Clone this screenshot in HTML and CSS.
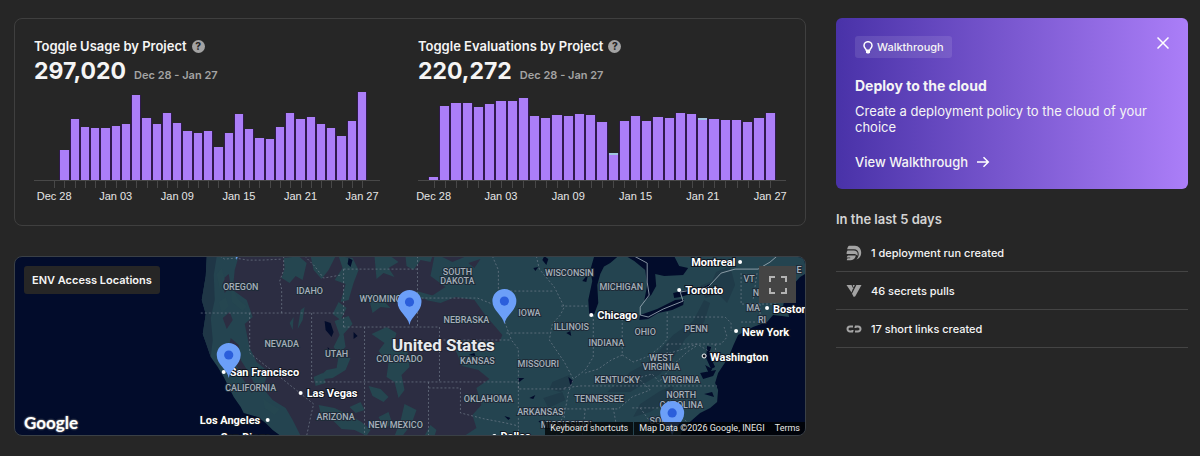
FILE: index.html
```html
<!DOCTYPE html>
<html lang="en">
<head>
<meta charset="UTF-8">
<meta name="viewport" content="width=device-width, initial-scale=1">
<title>Dashboard</title>
<link rel="stylesheet" href="styles.css">
</head>

<body>
<div class="dashboard">

	<main class="main">
		<section class="stats">
			<div class="stat">
				<h2>Toggle Usage by Project <button class="help" type="button" aria-label="About toggle usage">?</button></h2>
				<p class="total"><strong>297,020</strong> <span>Dec 28 - Jan 27</span></p>
				<div class="chart usage" id="usage"></div>
			</div>
			<div class="stat">
				<h2>Toggle Evaluations by Project <button class="help" type="button" aria-label="About toggle evaluations">?</button></h2>
				<p class="total"><strong>220,272</strong> <span>Dec 28 - Jan 27</span></p>
				<div class="chart evaluations" id="evaluations"></div>
			</div>
		</section>

		<section class="map">
			<svg class="canvas" viewBox="14 256 791 180" preserveAspectRatio="xMidYMid slice">
				<!-- land -->
				<path class="land" d="M206 256L205 276L201 300L205 314L202 334L206 345L210 357L217 367L223 377L228 387L233 397L240 407L243 413L257 417L265 423L272 430L280 436H680L684 427L692 420L700 413L710 408L717 402L718 390L715 383L718 373L724 364L729 356L733 346L738 335L753 327L767 322L773 315L782 316L789 317L788 311L783 307L785 295L793 285L800 277L805 274V256Z"/>
				<path class="coast" d="M206 256L205 276L201 300L205 314L202 334L210 357L212 340L210 318L214 300L213 275L216 256Z"/>
				<!-- dry plateau -->
				<path class="dry" d="M238 256L234 270L232 290L246 300L252 317L244 324L249 348L256 362L268 372L262 388L272 400L285 408L292 420L300 436H464L476 428L472 415L481 405L476 388L489 379L478 370L462 366L455 350L458 340L499 342L502 335L484 314L474 300L455 297L440 303L425 300L445 287L430 276L434 256Z"/>
				<path class="dry" d="M221 280L228 274L230 286L224 293ZM222 318L229 312L232 320L226 329ZM230 338L238 345L240 360L247 371L256 388L251 393L241 377L234 362L228 349ZM440 256L466 256L452 262ZM468 263L480 259L474 268Z"/>
				<!-- forests and mountains -->
				<path class="hill" d="M216 274L221 268L224 279L219 290ZM218 302L225 297L228 306L221 313ZM230 285L238 300L246 306L242 311L231 302ZM283 258L298 256L306 263L302 280L295 276L289 283L281 278L284 268ZM310 256L335 256L328 270L321 279L313 270ZM338 256L352 258L358 270L353 283L348 300L340 302L345 284L334 280L342 268ZM334 321L348 316L352 324L343 334L345 347L338 354L333 347L339 335ZM338 302L346 308L340 320L332 314ZM338 356L350 358L345 370L332 378L315 380L326 370L336 368ZM313 377L322 373L325 383L315 386ZM371 334L386 327L396 333L393 343L407 351L409 367L401 375L404 390L398 398L394 382L386 377L388 363L378 351L384 343ZM368 386L380 389L388 397L383 402L372 396ZM318 405L334 408L348 415L361 422L370 430L366 436L354 430L341 429L333 421L321 417ZM374 257L390 256L398 262L388 268L394 277L383 273L376 279ZM368 297L382 300L390 308L380 307L372 313ZM405 256L432 256L430 262L420 260L413 270L406 266ZM416 291L434 296L430 300L420 298ZM404 404L416 410L411 424L402 436H394L400 421ZM262 398L270 404L279 409L274 415L264 408ZM300 310L304 307L302 320L297 329ZM289 323L293 317L292 330ZM349 407L360 402L364 410L355 413ZM378 417L388 412L392 424L384 428ZM424 436L430 425L436 430L434 436Z"/>
				<path class="ridge" d="M607 392L630 372L650 361L673 335L693 321L704 300L710 303L704 322L685 339L673 358L660 374L630 392ZM700 286L712 281L716 272L730 266L735 285L727 303L718 294L705 298ZM552 382L569 375L572 386L560 392L549 389ZM543 398L562 392L565 400L548 408ZM640 404L660 391L674 385L670 399L650 412L633 417Z"/>
				<!-- lakes -->
				<path class="water" d="M600 256L606 262L600 274L597 285L598 303L594 314L589 315L588 300L592 281L590 270L594 256ZM598 256H618L610 263L603 267ZM626 256H674L679 266L688 268L683 275L664 276L655 274L656 286L651 295L644 301L647 285L645 270L634 261ZM640 315L657 309L675 300L684 299L683 305L672 310L658 313L648 319L639 320ZM673 293L690 289L704 287L710 284L709 290L694 293L680 297L674 298ZM324 321L330 323L333 332L331 337L325 330ZM348 258L352 260L350 267L347 264ZM327 347L330 350L328 353ZM353 332L357 336L353 339Z"/>
				<path class="water" d="M707 346L711 347L709 354L715 367L711 369L706 358ZM700 373L716 370L713 376L703 379ZM705 365L712 369L709 374ZM712 392L704 394L714 397ZM544 256L548 259L546 265L542 260ZM533 268L538 267L535 271ZM566 333L570 331L571 336ZM582 281L588 274L586 282ZM468 355L474 353L475 356ZM517 378L524 378L519 382ZM529 398L535 395L533 399ZM568 377L573 381L570 385ZM504 416L510 418L508 420ZM538 421L545 420L541 424Z"/>
				<!-- borders -->
				<path class="border" d="M219 256L224 259L235 258L247 260L261 260L281 259M283 256V270L279 281L281 289V313M200 313H343M249 313V353L313 404L310 417L306 436M311 313V382M343 269V327M343 269H417M417 256V327M343 327H439V382M311 382H518M364 327V436M304 256L314 266L323 278L340 275M417 298H477L492 304M439 340H511M428 382V436M428 388H460V413L484 419L505 423L518 426V436M518 382V426M492 256L498 270V292L501 308L504 321L511 340L518 349V389M498 291H554M536 256L539 269L554 287L564 307L560 315L552 324L549 340L564 362L573 379L568 393L565 410L560 423L556 436M506 333H550M561 306H588M593 315V357L585 370L573 379M622 315V355L611 360L598 369L585 373M622 355L633 362L649 356L661 346L667 339V312M673 317H725L731 323V331M667 344H721L727 337L724 327M519 389H567M564 388L580 386H717M555 409H618L632 397L650 390M564 408V436M585 409L582 436M613 408L618 436M632 408L660 408L674 412L687 422M640 408L650 422L656 436M650 390L638 378L652 374L659 382L672 366L687 352L696 346M667 344V354L680 350L697 344L710 352M715 344L716 355M741 273V304M741 322H760M742 304H776M760 304V322M757 273L753 300M776 271L780 300"/>
				<path class="country" d="M634 256L647 263V282L649 295L640 307L640 315L648 317L663 309L683 301L680 292L708 287L721 273L735 269H758L770 262L777 256"/>

				<g class="states">
					<text x="240" y="290">OREGON</text>
					<text x="309" y="294">IDAHO</text>
					<text x="380" y="302">WYOMING</text>
					<text x="457" y="275">SOUTH</text>
					<text x="457" y="284">DAKOTA</text>
					<text x="569" y="276">WISCONSIN</text>
					<text x="621" y="290">MICHIGAN</text>
					<text x="466" y="323">NEBRASKA</text>
					<text x="529" y="316">IOWA</text>
					<text x="571" y="330">ILLINOIS</text>
					<text x="606" y="346">INDIANA</text>
					<text x="645" y="335">OHIO</text>
					<text x="696" y="332">PENN</text>
					<text x="281" y="347">NEVADA</text>
					<text x="336" y="357">UTAH</text>
					<text x="399" y="362">COLORADO</text>
					<text x="477" y="364">KANSAS</text>
					<text x="538" y="367">MISSOURI</text>
					<text x="661" y="361">WEST</text>
					<text x="661" y="370">VIRGINIA</text>
					<text x="681" y="383">VIRGINIA</text>
					<text x="617" y="383">KENTUCKY</text>
					<text x="599" y="402">TENNESSEE</text>
					<text x="681" y="398">NORTH</text>
					<text x="681" y="408">CAROLINA</text>
					<text x="664" y="424">SOUTH</text>
					<text x="250" y="391">CALIFORNIA</text>
					<text x="335" y="420">ARIZONA</text>
					<text x="395" y="428">NEW MEXICO</text>
					<text x="488" y="402">OKLAHOMA</text>
					<text x="540" y="415">ARKANSAS</text>
					<text x="566" y="428">MISSISSIPPI</text>
					<text x="749" y="282">VT</text>
					<text x="759" y="296">NH</text>
					<text x="753" y="311">MA</text>
					<text x="762" y="323">RI</text>
					<text x="799" y="273">E</text>
				</g>

				<text class="nation" x="443" y="351">United States</text>

				<g class="cities">
					<text x="229" y="376">San Francisco</text>
					<text x="306" y="397">Las Vegas</text>
					<text x="199" y="424">Los Angeles</text>
					<text x="220" y="441">San Diego</text>
					<text x="500" y="440">Dallas</text>
					<text x="597" y="319">Chicago</text>
					<text x="685" y="294">Toronto</text>
					<text x="691" y="266">Montreal</text>
					<text x="773" y="313">Boston</text>
					<text x="742" y="336">New York</text>
					<text x="710" y="361">Washington</text>
				</g>
				<g class="dots">
					<circle cx="223" cy="372" r="2"/>
					<circle cx="300" cy="393" r="2"/>
					<circle cx="267" cy="420" r="2"/>
					<circle cx="494" cy="436" r="2"/>
					<circle cx="591" cy="315" r="2"/>
					<circle cx="679" cy="290" r="2"/>
					<circle cx="740" cy="262" r="2"/>
					<circle cx="767" cy="308" r="2"/>
					<circle cx="736" cy="331" r="2"/>
					<circle class="capital" cx="704" cy="356" r="2"/>
				</g>

				<!-- access locations -->
				<defs>
					<g id="pin">
						<path class="pin" d="M0 0C-1.500 -9 -12 -13 -12 -23A12 12 0 0 1 12 -23C12 -13 1.500 -9 0 0Z"/>
						<circle class="pin-eye" cx="0" cy="-23" r="4.600"/>
					</g>
				</defs>
				<use href="#pin" x="228" y="378"/>
				<use href="#pin" x="409" y="325"/>
				<use href="#pin" x="504" y="324"/>
				<use href="#pin" x="672" y="436"/>
				<use href="#pin" x="236" y="260"/>
			</svg>

			<h2 class="map-title">ENV Access Locations</h2>
			<button class="fullscreen" type="button" aria-label="Toggle fullscreen view">
				<svg viewBox="0 0 18 18" width="18" height="18"><path d="M0 0v6h2V2h4V0H2zm16 0h-4v2h4v4h2V0h-2zm0 16h-4v2h6v-6h-2v4zM2 12H0v6h6v-2H2v-4z"/></svg>
			</button>
			<a class="google" href="#">Google</a>
			<div class="map-bar">
				<button type="button">Keyboard shortcuts</button>
				<span>Map Data ©2026 Google, INEGI</span>
				<a href="#">Terms</a>
			</div>
		</section>
	</main>

	<aside class="side">
		<section class="walkthrough">
			<div class="walkthrough-top">
				<span class="tag">
					<svg viewBox="0 0 10 13" width="10" height="13"><path d="M3.300 9.200C3.300 7.600 1 7 1 4.700a4 4 0 0 1 8 0C9 7 6.700 7.600 6.700 9.200z"/><path class="fill" d="M3 9h4v2.500L6 12.500H4L3 11.500z"/></svg>
					Walkthrough
				</span>
				<button class="close" type="button" aria-label="Close">
					<svg viewBox="0 0 12 12" width="12" height="12"><path d="M.5 .5l11 11M11.500 .5L.5 11.500"/></svg>
				</button>
			</div>
			<h2>Deploy to the cloud</h2>
			<p>Create a deployment policy to the cloud of your choice</p>
			<a href="#">View Walkthrough
				<svg viewBox="0 0 14 12" width="14" height="12"><path d="M1 6h11M7.500 1.200L12.300 6l-4.800 4.800"/></svg>
			</a>
		</section>

		<section class="activity">
			<h2>In the last 5 days</h2>
			<ul>
				<li>
					<svg viewBox="0 0 16 16" width="16" height="16"><path d="M3 .8h6c3.600 0 6.200 3 6.200 6.900 0 3.300-2 6-4.800 6.800 1.600-1.600 2.300-3.400 2.300-5.400C12.700 6 10.700 4.300 8 4.300H1.200C1.500 2.600 2 1.500 3 .8z"/><path d="M1.500 5.600h6.300c2.400 0 3.900 1.500 3.900 3.500 0 .6-.1 1.100-.3 1.600C10.600 9.600 9.300 9.100 7.900 9.100H.6c0-1.600.2-2.600.9-3.500z"/><path d="M2.200 10.400h7.600c-.3 2.700-2.200 4.600-4.800 4.800H.8c0-.9.300-1.500.9-1.900h2.500v-.9H.8c.1-1 .6-1.700 1.400-2z"/></svg>
					1 deployment run created
				</li>
				<li>
					<svg viewBox="0 0 16 16" width="16" height="16"><path d="M.5 2h5l1.600 3.300L5.500 9.500z"/><path d="M6.700 2h2.100L7.600 4.700zM10.400 2h5.100L9.300 13.300 7.800 14 6 10.700z"/></svg>
					46 secrets pulls
				</li>
				<li>
					<svg viewBox="0 0 16 16" width="16" height="16"><path class="line" d="M7 5.500H4a2.500 2.500 0 0 0 0 5h3M6.500 10.500V9M9 10.500H12a2.500 2.500 0 0 0 0-5H9M9.500 5.500V7"/></svg>
					17 short links created
				</li>
			</ul>
		</section>
	</aside>

</div>

<script src="script.js"></script>
</body>
</html>
```
FILE: styles.css
```css
*{
	box-sizing:border-box;
}
body{
	margin:0;
	background-color:#262626;
	color:#f5f5f5;
	font-family:Inter, "Liberation Sans", sans-serif;
}
h2, p, ul{
	margin:0;
	padding:0;
}
button{
	margin:0;
	padding:0;
	border:0;
	background:none;
	color:inherit;
	font-family:inherit;
	cursor:pointer;
}
a{
	color:inherit;
	text-decoration:none;
}

.dashboard{
	display:grid;
	grid-template-columns:minmax(0, 9fr) minmax(0, 4fr);
	gap:30px;
	padding:18px 12px 20px 14px;
}
.main{
	display:flex;
	flex-direction:column;
	gap:30px;
}

/* charts */
.stats{
	display:grid;
	grid-template-columns:1fr 1fr;
	gap:16px;
	padding:18px 19px;
	border:1px solid #3f3f3f;
	border-radius:8px;
}
.stat h2{
	display:flex;
	align-items:center;
	gap:5px;
	font-size:13px;
	line-height:18px;
	font-weight:600;
}
.help{
	width:13px;
	height:13px;
	border-radius:50%;
	background-color:#a3a3a3;
	color:#262626;
	font-size:10px;
	line-height:13px;
	font-weight:800;
}
.total{
	display:flex;
	align-items:baseline;
	gap:8px;
	line-height:32px;
}
.total strong{
	font-size:23px;
	font-weight:700;
}
.total span{
	color:#a3a3a3;
	font-size:11px;
	font-weight:600;
}
.chart{
	display:flex;
	align-items:flex-end;
	gap:2px;
	height:90px;
	margin-bottom:26px;
	border-bottom:1px solid #484848;
}
.usage{
	margin-right:22px;
	padding:0 14px 0 16px;
}
.evaluations{
	padding:0 11px;
}
.day{
	display:flex;
	position:relative;
	flex:1;
	align-items:flex-end;
	height:100%;
}
.day::after{
	content:"";
	position:absolute;
	top:100%;
	left:50%;
	width:1px;
	height:8px;
	background-color:#484848;
}
.bar{
	width:100%;
	background-color:#ab7ef8;
	box-shadow:-1px 0 #2f1a4d, 1px 0 #2f1a4d;
}
.bar.mixed{
	border-top:2px solid #9fc5e0;
}
.day time{
	position:absolute;
	top:100%;
	left:50%;
	transform:translateX(-50%);
	padding-top:9px;
	color:#e5e5e5;
	font-family:"Liberation Sans", Arial, sans-serif;
	font-size:11px;
	line-height:14px;
	white-space:nowrap;
}

/* map */
.map{
	position:relative;
	overflow:hidden;
	height:180px;
	border-radius:8px;
	border:1px solid #3a4046;
	background-color:#020c2b;
	font-family:Roboto, "Liberation Sans", sans-serif;
}
.canvas{
	display:block;
	width:100%;
	height:100%;
}
.land{
	fill:#244450;
}
.coast{
	fill:#1f3646;
}
.dry{
	fill:#2c2d42;
}
.hill{
	fill:#254650;
}
.ridge{
	fill:#203b49;
}
.water{
	fill:#020c2b;
}
.border{
	fill:none;
	stroke:#788391;
	stroke-width:.8;
	stroke-dasharray:2 2;
	opacity:.8;
}
.country{
	fill:none;
	stroke:#a5b3bd;
	stroke-width:.8;
}
.states text{
	fill:#a5afb9;
	stroke:#1e2b38;
	stroke-width:2px;
	paint-order:stroke;
	font-size:9px;
	font-weight:500;
	text-anchor:middle;
}
.nation{
	fill:#e8ebee;
	stroke:#20232f;
	stroke-width:2px;
	paint-order:stroke;
	font-size:17px;
	font-weight:700;
	text-anchor:middle;
}
.cities text{
	fill:#fff;
	stroke:#10151f;
	stroke-width:2px;
	paint-order:stroke;
	font-size:11px;
	font-weight:700;
}
.dots circle{
	fill:#fff;
}
.dots .capital{
	fill:#10151f;
	stroke:#fff;
}
.pin{
	fill:#6c9ff8;
}
.pin-eye{
	fill:#2b5edb;
}
.map-title{
	position:absolute;
	top:9px;
	left:9px;
	padding:0 8px;
	border-radius:3px;
	background-color:#262626;
	font-family:Inter, "Liberation Sans", sans-serif;
	font-size:11px;
	line-height:28px;
	font-weight:600;
}
.fullscreen{
	display:grid;
	place-items:center;
	position:absolute;
	top:9px;
	right:9px;
	width:37px;
	height:37px;
	background-color:#444;
}
.fullscreen svg{
	fill:#b3b3b3;
}
.google{
	position:absolute;
	left:9px;
	bottom:1px;
	font-family:Lato, "Open Sans", sans-serif;
	font-size:17px;
	line-height:22px;
	font-weight:700;
	color:#fff;
	text-shadow:0 0 2px #777, 0 0 2px #777;
}
.map-bar{
	display:flex;
	position:absolute;
	right:0;
	bottom:0;
	font-size:9px;
	line-height:13px;
	color:#e8e8e8;
}
.map-bar > *{
	padding:0 5px;
	background-color:rgba(0, 0, 0, .75);
}
.map-bar button{
	font-size:9px;
	line-height:13px;
	margin-right:1px;
}

/* side column */
.walkthrough{
	padding:18px 19px;
	border-radius:6px;
	background:linear-gradient(90deg, #4932a8, #ab7ef8);
}
.walkthrough-top{
	display:flex;
	justify-content:space-between;
	align-items:flex-start;
}
.tag{
	display:flex;
	align-items:center;
	gap:4px;
	padding:0 8px;
	border-radius:3px;
	background-color:rgba(255, 255, 255, .1);
	font-size:11px;
	line-height:22px;
	font-weight:500;
}
.walkthrough svg{
	fill:none;
	stroke:#fff;
	stroke-width:1.5;
}
.tag .fill{
	fill:#fff;
	stroke:none;
}
.close{
	display:grid;
	place-items:center;
	height:14px;
}
.walkthrough h2{
	margin-top:18px;
	font-size:14px;
	line-height:20px;
	font-weight:700;
}
.walkthrough p{
	margin-top:7px;
	font-size:13px;
	line-height:16px;
}
.walkthrough a{
	display:inline-flex;
	align-items:center;
	gap:8px;
	margin-top:18px;
	font-size:13px;
	line-height:18px;
	font-weight:500;
}
.activity h2{
	margin-top:20px;
	color:#d4d4d4;
	font-size:13px;
	line-height:20px;
	font-weight:600;
}
.activity ul{
	margin-top:5px;
	list-style:none;
}
.activity li{
	display:flex;
	align-items:center;
	gap:9px;
	height:38px;
	padding-left:10px;
	border-bottom:1px solid #444;
	font-size:11px;
	font-weight:500;
}
.activity svg{
	fill:#a3a3a3;
}
.activity .line{
	fill:none;
	stroke:#a3a3a3;
	stroke-width:2;
}
```
FILE: script.js
```js
var usage = [0, 30, 61, 53, 52, 52, 54, 56, 85, 62, 56, 67, 57, 49, 47, 49, 33, 47, 66, 51, 42, 41, 53, 67, 61, 63, 56, 52, 44, 59, 88];
var evaluations = [3, 74, 77, 77, 73, 76, 79, 79, 82, 64, 62, 65, 64, 66, 65, 58, 27, 59, 64, 59, 63, 62, 67, 66, 62, 61, 60, 60, 58, 62, 67];
var labels = ["Dec 28", "Jan 03", "Jan 09", "Jan 15", "Jan 21", "Jan 27"];

// mixed: days that also have a second project on top of the bar
function drawChart(id, values, mixed) {
	var html = "";
	for (var i = 0; i < values.length; i++) {
		var cls = mixed.indexOf(i) >= 0 ? "bar mixed" : "bar";
		html += "<div class='day'>";
		if (values[i] > 0) {
			html += "<div class='" + cls + "' style='height:" + values[i] + "px'></div>";
		}
		// one date every 6 days
		if (i % 6 == 0) {
			html += "<time>" + labels[i / 6] + "</time>";
		}
		html += "</div>";
	}
	document.getElementById(id).innerHTML = html;
}

drawChart("usage", usage, []);
drawChart("evaluations", evaluations, [16, 24]);
```
